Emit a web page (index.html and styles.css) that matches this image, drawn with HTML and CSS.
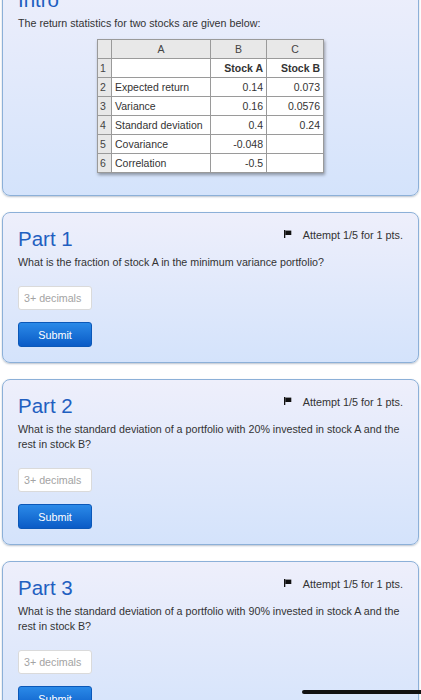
FILE: index.html
```html
<!DOCTYPE html>
<html>
<head>
<meta charset="utf-8">
<link rel="stylesheet" href="styles.css">
</head>
<body>
<div class="page">
  <section class="card intro">
    <h2 class="title">Intro</h2>
    <p class="text">The return statistics for two stocks are given below:</p>
    <table class="sheet">
      <colgroup><col class="c0"><col class="c1"><col class="c2"><col class="c3"></colgroup>
      <tr class="hdr"><th></th><th>A</th><th>B</th><th>C</th></tr>
      <tr><td class="rn">1</td><td></td><td class="num b">Stock A</td><td class="num b">Stock B</td></tr>
      <tr><td class="rn">2</td><td>Expected return</td><td class="num">0.14</td><td class="num">0.073</td></tr>
      <tr><td class="rn">3</td><td>Variance</td><td class="num">0.16</td><td class="num">0.0576</td></tr>
      <tr><td class="rn">4</td><td>Standard deviation</td><td class="num">0.4</td><td class="num">0.24</td></tr>
      <tr><td class="rn">5</td><td>Covariance</td><td class="num">-0.048</td><td class="num"></td></tr>
      <tr><td class="rn">6</td><td>Correlation</td><td class="num">-0.5</td><td class="num"></td></tr>
    </table>
  </section>

  <section class="card part">
    <div class="head">
      <h2 class="title">Part 1</h2>
      <div class="attempt"><svg class="flag" width="8" height="8" viewBox="0 0 8 8"><rect x="0" y="0" width="1.3" height="8" fill="#111"/><rect x="1.3" y="0.6" width="6" height="4.4" fill="#111"/></svg><span>Attempt 1/5 for 1 pts.</span></div>
    </div>
    <p class="text q">What is the fraction of stock A in the minimum variance portfolio?</p>
    <input class="answer" type="text" placeholder="3+ decimals">
    <button class="submit">Submit</button>
  </section>

  <section class="card part">
    <div class="head">
      <h2 class="title">Part 2</h2>
      <div class="attempt"><svg class="flag" width="8" height="8" viewBox="0 0 8 8"><rect x="0" y="0" width="1.3" height="8" fill="#111"/><rect x="1.3" y="0.6" width="6" height="4.4" fill="#111"/></svg><span>Attempt 1/5 for 1 pts.</span></div>
    </div>
    <p class="text q">What is the standard deviation of a portfolio with 20% invested in stock A and the rest in stock B?</p>
    <input class="answer" type="text" placeholder="3+ decimals">
    <button class="submit">Submit</button>
  </section>

  <section class="card part">
    <div class="head">
      <h2 class="title">Part 3</h2>
      <div class="attempt"><svg class="flag" width="8" height="8" viewBox="0 0 8 8"><rect x="0" y="0" width="1.3" height="8" fill="#111"/><rect x="1.3" y="0.6" width="6" height="4.4" fill="#111"/></svg><span>Attempt 1/5 for 1 pts.</span></div>
    </div>
    <p class="text q">What is the standard deviation of a portfolio with 90% invested in stock A and the rest in stock B?</p>
    <input class="answer" type="text" placeholder="3+ decimals">
    <button class="submit">Submit</button>
  </section>
</div>
<div class="home-indicator"></div>
</body>
</html>
```
FILE: styles.css
```css
html, body {
  margin: 0;
  padding: 0;
  background: #fff;
  overflow: hidden;
  height: 700px;
}
body {
  font-family: "Liberation Sans", Arial, Helvetica, sans-serif;
  color: #333;
}
.page {
  padding: 0 2px;
}
.card {
  border: 1px solid #8cb0d8;
  border-radius: 8px;
  padding: 14px 15px 15px;
  background: linear-gradient(to bottom, #eeeffb 0%, #d4e3fb 100%);
  box-shadow: 0 1px 2px rgba(60, 80, 110, 0.35);
  margin-bottom: 16px;
}
.intro {
  margin-top: -27px;
  padding-bottom: 22px;
}
.title {
  margin: 0;
  font-weight: normal;
  font-size: 20.5px;
  line-height: 24px;
  color: #1f5fc0;
}
.text {
  margin: 4px 0 0;
  font-size: 10.7px;
  line-height: 15px;
  color: #333;
}
.sheet {
  margin: 8px auto 0;
  border-collapse: collapse;
  table-layout: fixed;
  width: 226px;
  background: #fff;
  border: 1px solid #6a6a6a;
  box-shadow: 1px 2px 3px rgba(0, 0, 0, 0.35);
  font-size: 10.5px;
  color: #333;
}
.sheet .c0 { width: 14px; }
.sheet .c1 { width: 99px; }
.sheet .c2 { width: 56px; }
.sheet .c3 { width: 57px; }
.sheet th, .sheet td {
  border: 1px solid #9a9a9a;
  height: 18px;
  padding: 0 3px;
  white-space: nowrap;
  overflow: hidden;
}
.sheet th {
  background: #e8e8e8;
  font-weight: normal;
  color: #444;
  text-align: center;
}
.sheet td.rn {
  background: #e8e8e8;
  padding: 0 2px;
  color: #444;
}
.sheet td.num {
  text-align: right;
}
.sheet td.b {
  font-weight: bold;
}
.head {
  display: flex;
  justify-content: space-between;
  align-items: flex-start;
}
.attempt {
  display: flex;
  align-items: center;
  margin-top: 1px;
  font-size: 10.8px;
  line-height: 14px;
  color: #333;
}
.flag {
  display: block;
  margin-right: 11px;
  margin-top: -2px;
}
.q {
  margin-top: 4px;
}
.answer {
  display: block;
  box-sizing: border-box;
  width: 74px;
  height: 24px;
  margin: 16px 0 0;
  padding: 0 5px;
  border: 1px solid #dadada;
  border-radius: 3px;
  background: #fff;
  font-family: "Liberation Sans", Arial, sans-serif;
  font-size: 10.7px;
  color: #333;
  outline: none;
}
.answer::placeholder {
  color: #a3a3a3;
}
.submit {
  display: block;
  box-sizing: border-box;
  width: 74px;
  height: 25px;
  margin: 12px 0 0;
  padding: 0;
  border: 1px solid #0b58b8;
  border-radius: 3px;
  background: linear-gradient(to bottom, #2b8ae8 0%, #0a5bc6 100%);
  color: #fff;
  font-family: "Liberation Sans", Arial, sans-serif;
  font-size: 10.8px;
}
.home-indicator {
  position: fixed;
  left: 302px;
  top: 690px;
  width: 140px;
  height: 4px;
  border-radius: 2px;
  background: #111;
}
```
